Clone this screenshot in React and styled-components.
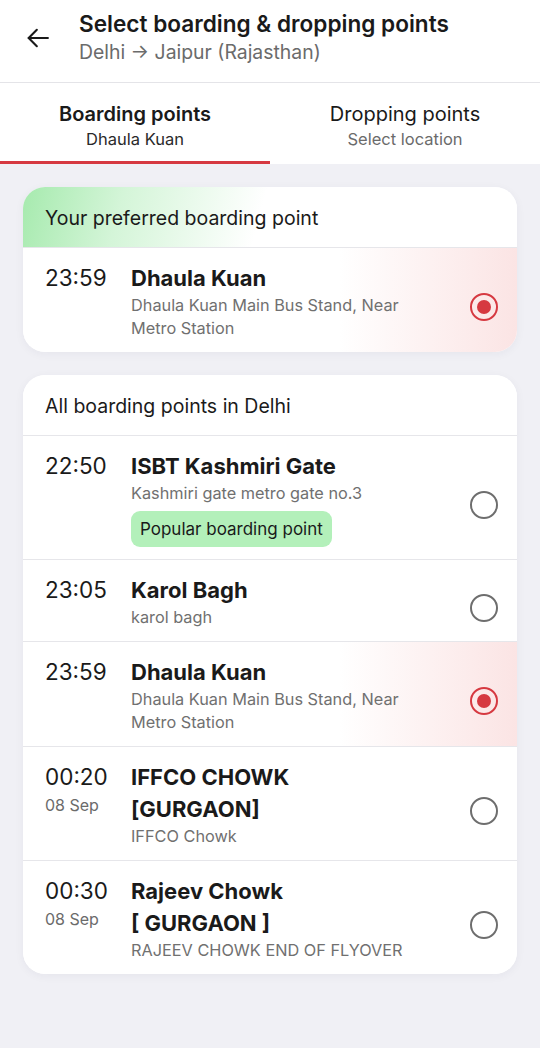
import React from 'react';
import styled, { createGlobalStyle } from 'styled-components';

const GlobalStyle = createGlobalStyle`
  body {
    margin: 0;
    background: #f0f0f5;
    font-family: Inter, "Noto Sans", sans-serif;
    color: #1a1a1a;
  }
`;

const points = [
  { time: '22:50', name: 'ISBT Kashmiri Gate', address: 'Kashmiri gate metro gate no.3', popular: true },
  { time: '23:05', name: 'Karol Bagh', address: 'karol bagh' },
  { time: '23:59', name: 'Dhaula Kuan', address: 'Dhaula Kuan Main Bus Stand, Near Metro Station', selected: true },
  { time: '00:20', date: '08 Sep', name: 'IFFCO CHOWK [GURGAON]', address: 'IFFCO Chowk' },
  { time: '00:30', date: '08 Sep', name: 'Rajeev Chowk [\u00a0GURGAON\u00a0]', address: 'RAJEEV CHOWK END OF FLYOVER' },
];

function PointRow({ point }) {
  return (
    <Row $selected={point.selected}>
      <TimeCol>
        <Time>{point.time}</Time>
        {point.date && <DateText>{point.date}</DateText>}
      </TimeCol>
      <Info>
        <Name>{point.name}</Name>
        <Address>{point.address}</Address>
        {point.popular && <Chip>Popular boarding point</Chip>}
      </Info>
      <Radio $checked={point.selected} />
    </Row>
  );
}

export default function App() {
  return (
    <Page>
      <GlobalStyle />
      <Header>
        <BackButton>
          <svg width="28" height="28" viewBox="0 0 24 24" fill="none" stroke="#1a1a1a" strokeWidth="1.8" strokeLinecap="round" strokeLinejoin="round">
            <path d="M20.5 12H4" />
            <path d="M11 5l-7 7 7 7" />
          </svg>
        </BackButton>
        <HeaderText>
          <Title>Select boarding &amp; dropping points</Title>
          <Subtitle>Delhi → Jaipur (Rajasthan)</Subtitle>
        </HeaderText>
      </Header>

      <Tabs>
        <Tab $active>
          <TabTitle $active>Boarding points</TabTitle>
          <TabSub $active>Dhaula Kuan</TabSub>
        </Tab>
        <Tab>
          <TabTitle>Dropping points</TabTitle>
          <TabSub>Select location</TabSub>
        </Tab>
      </Tabs>

      <Content>
        <Card>
          <CardHeader $preferred>Your preferred boarding point</CardHeader>
          <PointRow point={points[2]} />
        </Card>

        <Card>
          <CardHeader>All boarding points in Delhi</CardHeader>
          {points.map((p) => (
            <PointRow key={p.time} point={p} />
          ))}
        </Card>
      </Content>
    </Page>
  );
}

const Page = styled.div`
  min-height: 1048px;
  background: #f0f0f5;
`;

const Header = styled.div`
  display: flex;
  align-items: center;
  height: 83px;
  background: #fff;
  border-bottom: 1px solid #e4e4e8;
  padding: 0 0 6px 0;
  box-sizing: border-box;
`;

const BackButton = styled.div`
  width: 79px;
  display: flex;
  justify-content: center;
  padding-right: 4px;
  box-sizing: border-box;
  svg { display: block; }
`;

const HeaderText = styled.div`
  display: flex;
  flex-direction: column;
`;

const Title = styled.div`
  font-size: 22.6px;
  font-weight: 600;
  line-height: 28px;
  color: #1a1a1a;
`;

const Subtitle = styled.div`
  font-size: 19.4px;
  line-height: 28px;
  color: #6b6b6b;
`;

const Tabs = styled.div`
  display: flex;
  background: #fff;
`;

const Tab = styled.div`
  flex: 1;
  height: 81px;
  display: flex;
  flex-direction: column;
  align-items: center;
  justify-content: center;
  box-sizing: border-box;
  padding-top: 5px;
  border-bottom: 3px solid ${(p) => (p.$active ? '#d63941' : 'transparent')};
`;

const TabTitle = styled.div`
  font-size: 20px;
  line-height: 28px;
  font-weight: ${(p) => (p.$active ? 600 : 400)};
  color: #1a1a1a;
`;

const TabSub = styled.div`
  font-size: 16.5px;
  line-height: 22px;
  color: ${(p) => (p.$active ? '#2a2a2a' : '#6b6b6b')};
`;

const Content = styled.div`
  display: flex;
  flex-direction: column;
  gap: 23px;
  padding: 23px 23px;
`;

const Card = styled.div`
  background: #fff;
  border-radius: 22px;
  overflow: hidden;
  box-shadow: 0 2px 10px rgba(40, 40, 80, 0.05);
`;

const CardHeader = styled.div`
  height: 61px;
  display: flex;
  align-items: center;
  padding: 2px 22px 0;
  box-sizing: border-box;
  font-size: 19.5px;
  color: #1a1a1a;
  border-bottom: 1px solid #e6e6ea;
  background: ${(p) =>
    p.$preferred
      ? 'linear-gradient(105deg, #a6eaae 0%, #d4f5d8 20%, #ffffff 48%)'
      : '#fff'};
`;

const Row = styled.div`
  display: flex;
  align-items: center;
  padding: 14px 19px 12px 22px;
  border-bottom: 1px solid #e6e6ea;
  background: ${(p) =>
    p.$selected ? 'linear-gradient(90deg, #ffffff 64%, #fbe4e4 100%)' : '#fff'};
  &:last-child { border-bottom: none; }
`;

const TimeCol = styled.div`
  width: 86px;
  align-self: flex-start;
  display: flex;
  flex-direction: column;
`;

const Time = styled.div`
  font-size: 22.5px;
  line-height: 32px;
  color: #1a1a1a;
`;

const DateText = styled.div`
  font-size: 16px;
  line-height: 24px;
  color: #6b6b6b;
`;

const Info = styled.div`
  flex: 1;
  display: flex;
  flex-direction: column;
  align-items: flex-start;
  padding-right: 62px;
`;

const Name = styled.div`
  font-size: 22px;
  font-weight: 700;
  line-height: 32px;
  color: #1a1a1a;
`;

const Address = styled.div`
  font-size: 16.3px;
  line-height: 23px;
  color: #707070;
`;

const Chip = styled.div`
  margin-top: 6px;
  background: #b3f0ba;
  border-radius: 9px;
  padding: 0 9px;
  height: 36px;
  display: flex;
  align-items: center;
  font-size: 17px;
  color: #1a1a1a;
`;

const Radio = styled.div`
  flex: none;
  width: 28px;
  height: 28px;
  margin-top: 12px;
  border-radius: 50%;
  box-sizing: border-box;
  border: 2.5px solid ${(p) => (p.$checked ? '#d63941' : '#6e6e6e')};
  display: flex;
  align-items: center;
  justify-content: center;
  &::after {
    content: '';
    display: ${(p) => (p.$checked ? 'block' : 'none')};
    width: 14px;
    height: 14px;
    border-radius: 50%;
    background: #d63941;
  }
`;
